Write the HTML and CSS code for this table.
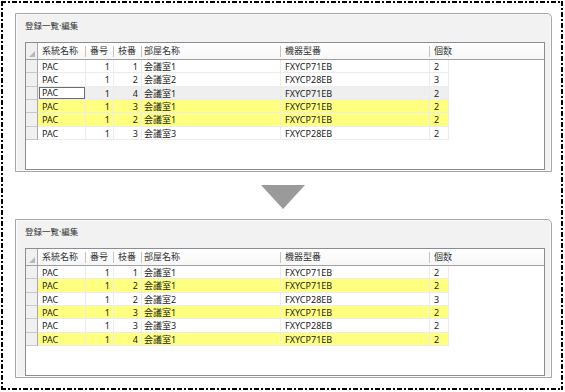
FILE: index.html
```html
<!DOCTYPE html>
<html lang="ja">
<head>
<meta charset="utf-8">
<link rel="stylesheet" href="styles.css">
</head>
<body>
<div class="frame">
  <div class="win">
    <div class="title">登録一覧·編集</div>
    <div class="grid">
      <div class="row hdr">
        <div class="rh corner"><span class="tri"></span></div>
        <div class="h">系統名称</div><div class="h">番号</div><div class="h">枝番</div><div class="h">部屋名称</div><div class="h">機器型番</div><div class="h">個数</div>
      </div>
      <div class="row"><div class="rh"></div><div class="c">PAC</div><div class="c n">1</div><div class="c n">1</div><div class="c s">会議室1</div><div class="c">FXYCP71EB</div><div class="c">2</div></div>
      <div class="row"><div class="rh"></div><div class="c">PAC</div><div class="c n">1</div><div class="c n">2</div><div class="c s">会議室2</div><div class="c">FXYCP28EB</div><div class="c">3</div></div>
      <div class="row sel"><div class="rh"></div><div class="c edit"><span class="box">PAC</span></div><div class="c n">1</div><div class="c n">4</div><div class="c s">会議室1</div><div class="c">FXYCP71EB</div><div class="c">2</div></div>
      <div class="row y"><div class="rh"></div><div class="c">PAC</div><div class="c n">1</div><div class="c n">3</div><div class="c s">会議室1</div><div class="c">FXYCP71EB</div><div class="c">2</div></div>
      <div class="row y"><div class="rh"></div><div class="c">PAC</div><div class="c n">1</div><div class="c n">2</div><div class="c s">会議室1</div><div class="c">FXYCP71EB</div><div class="c">2</div></div>
      <div class="row"><div class="rh"></div><div class="c">PAC</div><div class="c n">1</div><div class="c n">3</div><div class="c s">会議室3</div><div class="c">FXYCP28EB</div><div class="c">2</div></div>
    </div>
  </div>
  <div class="arrow"></div>
  <div class="win">
    <div class="title">登録一覧·編集</div>
    <div class="grid">
      <div class="row hdr">
        <div class="rh corner"><span class="tri"></span></div>
        <div class="h">系統名称</div><div class="h">番号</div><div class="h">枝番</div><div class="h">部屋名称</div><div class="h">機器型番</div><div class="h">個数</div>
      </div>
      <div class="row"><div class="rh"></div><div class="c">PAC</div><div class="c n">1</div><div class="c n">1</div><div class="c s">会議室1</div><div class="c">FXYCP71EB</div><div class="c">2</div></div>
      <div class="row y"><div class="rh"></div><div class="c">PAC</div><div class="c n">1</div><div class="c n">2</div><div class="c s">会議室1</div><div class="c">FXYCP71EB</div><div class="c">2</div></div>
      <div class="row"><div class="rh"></div><div class="c">PAC</div><div class="c n">1</div><div class="c n">2</div><div class="c s">会議室2</div><div class="c">FXYCP28EB</div><div class="c">3</div></div>
      <div class="row y"><div class="rh"></div><div class="c">PAC</div><div class="c n">1</div><div class="c n">3</div><div class="c s">会議室1</div><div class="c">FXYCP71EB</div><div class="c">2</div></div>
      <div class="row"><div class="rh"></div><div class="c">PAC</div><div class="c n">1</div><div class="c n">3</div><div class="c s">会議室3</div><div class="c">FXYCP28EB</div><div class="c">2</div></div>
      <div class="row y"><div class="rh"></div><div class="c">PAC</div><div class="c n">1</div><div class="c n">4</div><div class="c s">会議室1</div><div class="c">FXYCP71EB</div><div class="c">2</div></div>
    </div>
  </div>
</div>
</body>
</html>
```
FILE: styles.css
```css
* { box-sizing: border-box; }
html, body { margin: 0; padding: 0; background: #fff; }
body {
  width: 565px; height: 392px; overflow: hidden;
  font-family: "Noto Sans", "Noto Sans CJK JP", sans-serif;
  font-size: 9px; color: #222;
}
.frame {
  margin: 1px 0 0 1px;
  width: 562px; height: 389px;
  padding: 12px 11px 0 14px;
  background:
    repeating-linear-gradient(to right, #000 0 5px, transparent 5px 7px, #000 7px 9px, transparent 9px 11px) top left / 100% 2px no-repeat,
    repeating-linear-gradient(to right, #000 0 5px, transparent 5px 7px, #000 7px 9px, transparent 9px 11px) bottom left / 100% 2px no-repeat,
    repeating-linear-gradient(to bottom, #000 0 5px, transparent 5px 7px, #000 7px 9px, transparent 9px 11px) top left / 2px 100% no-repeat,
    repeating-linear-gradient(to bottom, #000 0 5px, transparent 5px 7px, #000 7px 9px, transparent 9px 11px) top right / 2px 100% no-repeat;
}
.win {
  width: 537px; height: 159px;
  border: 1px solid #a6a6a6;
  border-top-right-radius: 5px;
  background: #f2f2f2;
  box-shadow: inset 0 0 0 1px #fbfbfb;
  padding: 0 6px 1px 9px;
  display: flex; flex-direction: column;
}
.title {
  height: 28px;
  padding: 5px 0 0 0;
  line-height: 13px;
  font-size: 8.5px;
  color: #333;
}
.grid {
  flex: 1;
  border: 1px solid #8a8d94;
  background: #fff;
}
.row {
  display: grid;
  grid-template-columns: 12px 48px 28px 28px 139px 149px 19px;
  height: 13.33px;
  line-height: 13px;
}
.rh {
  background: #f0f0f0;
  border-right: 1px solid #a8a8a8;
  border-bottom: 1px solid #c8c8c8;
}
.c {
  padding-left: 4px;
  border-right: 1px solid #ececec;
  border-bottom: 1px solid #ececec;
  white-space: nowrap;
  overflow: hidden;
}
.c.n { text-align: right; padding-right: 3px; padding-left: 0; }
.c.s { padding-left: 2px; }
.row.y .c { background: #ffff80; }
.row.sel .c { background: #efefef; }
.row.sel .c.edit { padding: 0 0 0 1px; }
.box {
  display: block;
  width: 46px; height: 12px;
  margin-top: 0;
  background: #fff;
  border: 1px solid #6e6e6e;
  padding-left: 2px;
  line-height: 10px;
}
.row.hdr {
  height: 17px;
  line-height: 16px;
  border-bottom: 1px solid #a0a0a0;
  background: linear-gradient(#ffffff, #f7f7f7);
}
.hdr .rh { background: #f0f0f0; border-bottom: 0; position: relative; }
.tri {
  position: absolute; right: 2px; bottom: 2px;
  width: 0; height: 0;
  border-left: 6px solid transparent;
  border-bottom: 6px solid #b8b8b8;
}
.h {
  position: relative;
  padding-left: 4px;
  color: #333;
  white-space: nowrap;
}
.h:nth-child(5) { padding-left: 2px; }
.h::after {
  content: "";
  position: absolute; right: 0; top: 3px;
  width: 1px; height: 11px;
  background: #c4c4c4;
}
.arrow {
  width: 0; height: 0;
  margin: 13px auto 10px 246px;
  border-left: 22px solid transparent;
  border-right: 22px solid transparent;
  border-top: 24px solid #9a9a9a;
}
```
